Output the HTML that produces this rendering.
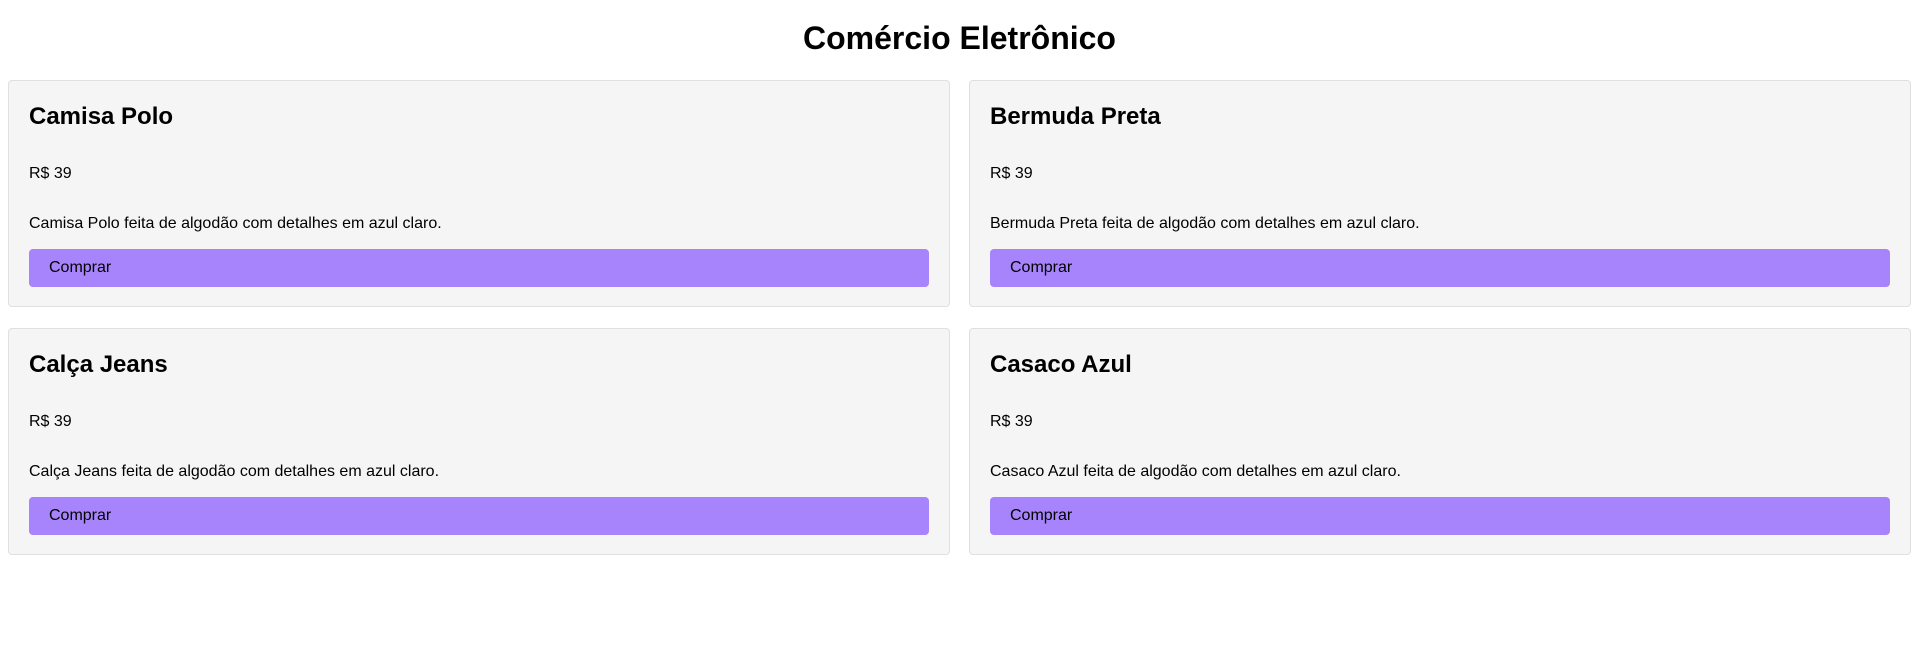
<!DOCTYPE html>
<html><head><meta charset="utf-8">
<style>
html,body{margin:0;padding:0;background:#fff;}
body{width:1919px;height:650px;font-family:"Liberation Sans",Arial,sans-serif;color:#000;position:relative;overflow:hidden;}
h1{position:absolute;top:20px;left:0;width:1919px;text-align:center;margin:0;font-size:32px;line-height:37px;font-weight:bold;}
.grid{position:absolute;top:80px;left:8px;width:1903px;display:grid;grid-template-columns:1fr 1fr;column-gap:19px;row-gap:21px;}
.card{box-sizing:border-box;height:227px;background:#f5f5f5;border:1px solid #e0e0e0;border-radius:4px;padding:20px;}
h2{margin:0;padding-top:2px;font-size:24px;line-height:28px;font-weight:bold;}
.price{margin:34px 0 0;font-size:16px;line-height:18px;}
.desc{margin:32px 0 0;font-size:16px;line-height:18px;}
.btn{margin-top:16px;height:38px;box-sizing:border-box;background:#a884fc;border-radius:4px;padding:10px 20px;font-size:16px;line-height:18px;}
</style></head><body>
<h1>Comércio Eletrônico</h1>
<div class="grid">
<div class="card"><h2>Camisa Polo</h2><p class="price">R$ 39</p><p class="desc">Camisa Polo feita de algodão com detalhes em azul claro.</p><div class="btn">Comprar</div></div>
<div class="card"><h2>Bermuda Preta</h2><p class="price">R$ 39</p><p class="desc">Bermuda Preta feita de algodão com detalhes em azul claro.</p><div class="btn">Comprar</div></div>
<div class="card"><h2>Calça Jeans</h2><p class="price">R$ 39</p><p class="desc">Calça Jeans feita de algodão com detalhes em azul claro.</p><div class="btn">Comprar</div></div>
<div class="card"><h2>Casaco Azul</h2><p class="price">R$ 39</p><p class="desc">Casaco Azul feita de algodão com detalhes em azul claro.</p><div class="btn">Comprar</div></div>
</div>
</body></html>
